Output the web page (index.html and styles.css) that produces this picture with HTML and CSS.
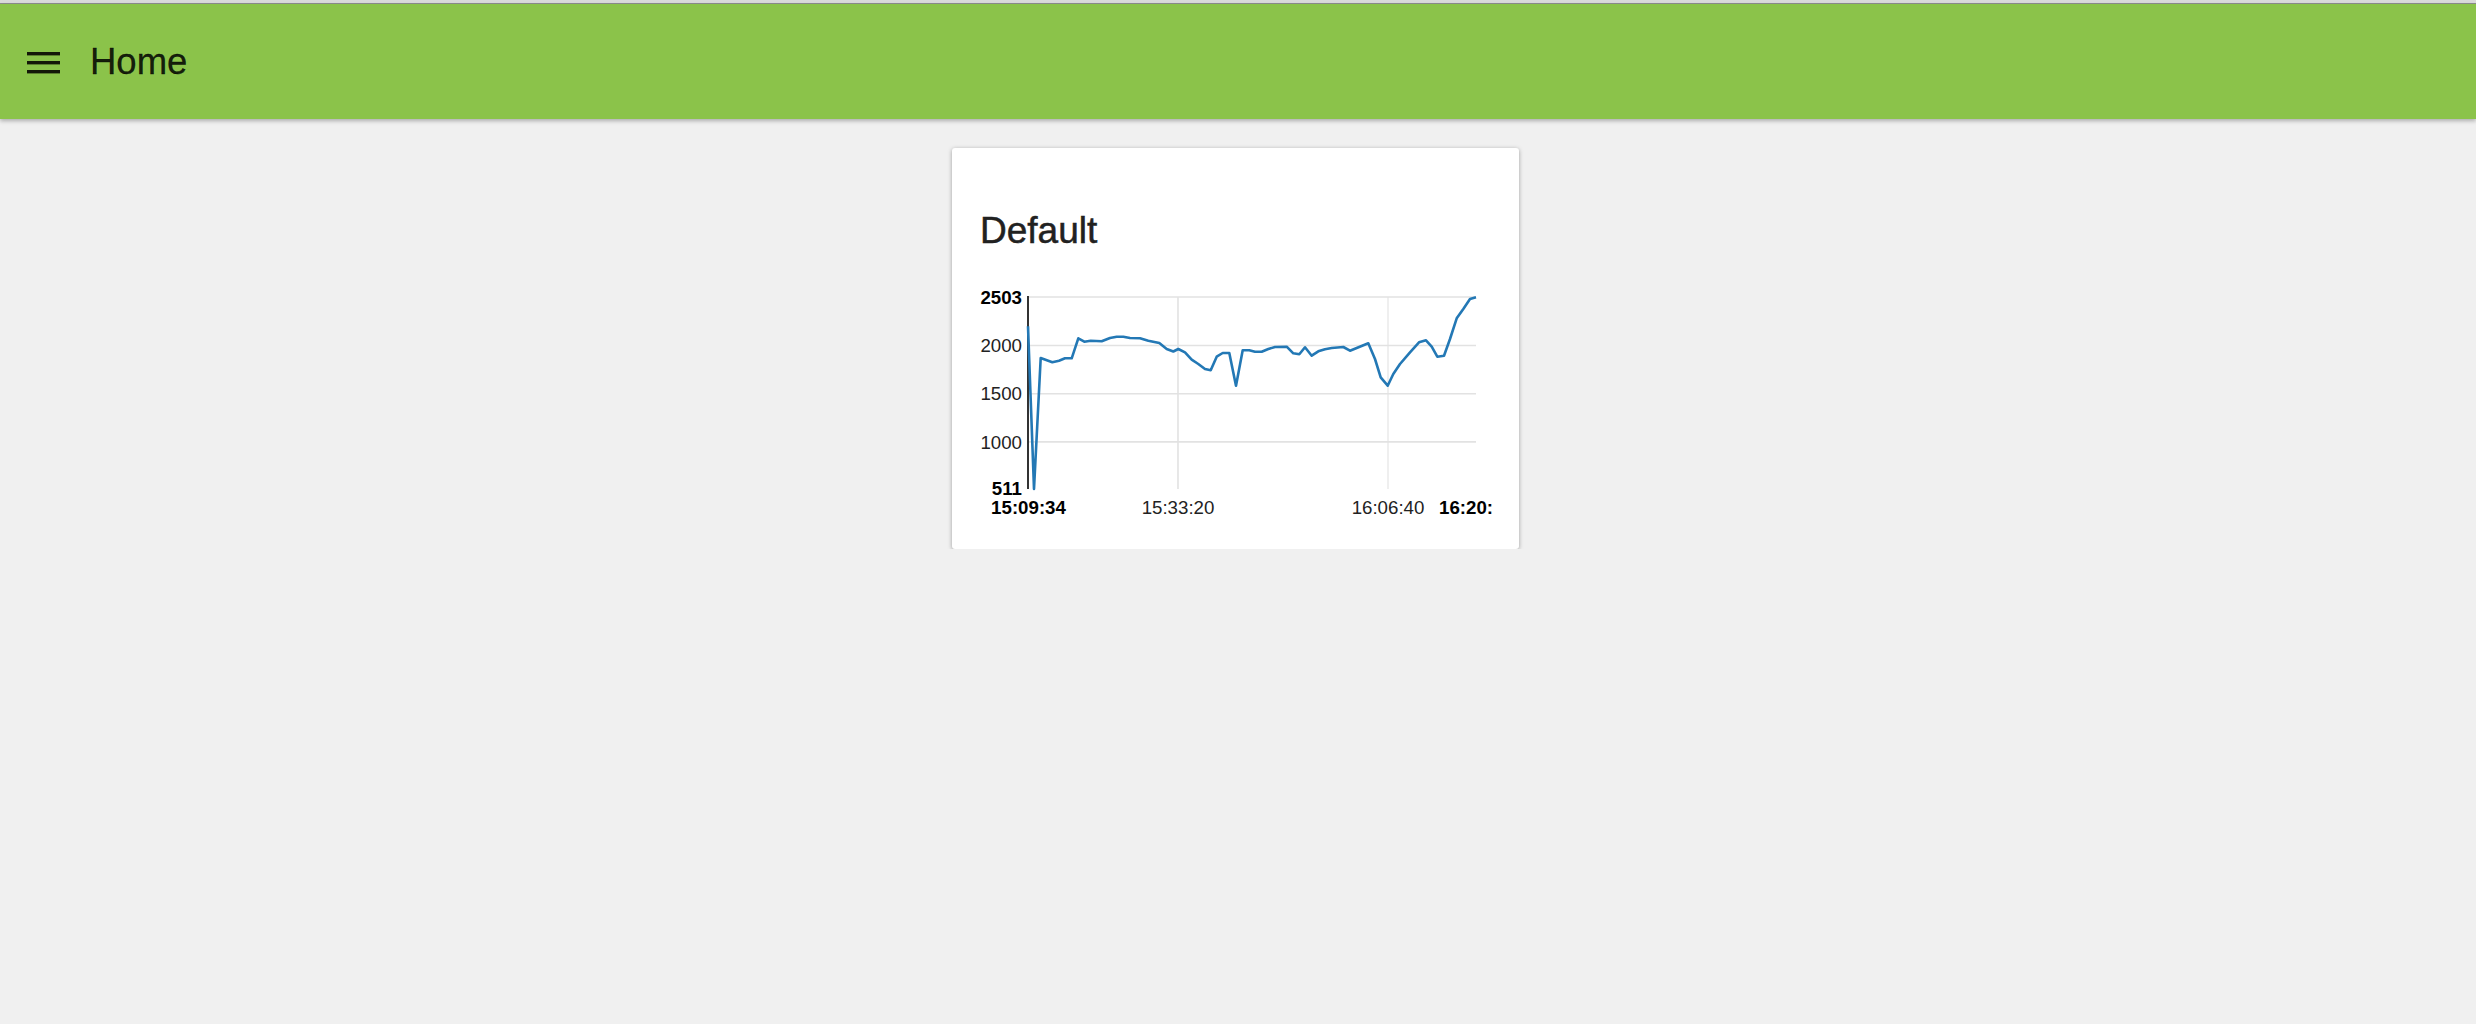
FILE: index.html
```html
<!DOCTYPE html>
<html>
<head>
<meta charset="utf-8">
<link rel="stylesheet" href="styles.css">
</head>
<body>
<div class="topstrip"></div>
<header class="appbar">
  <svg class="menu" width="33" height="22" viewBox="0 0 33 22">
    <rect x="0" y="0" width="33" height="3.4" fill="#141808"/>
    <rect x="0" y="9" width="33" height="3.4" fill="#141808"/>
    <rect x="0" y="18" width="33" height="3.4" fill="#141808"/>
  </svg>
  <h1 class="title">Home</h1>
</header>
<main class="content">
  <section class="card">
    <h2 class="card-title">Default</h2>
    <svg class="chart" width="514" height="235" viewBox="980 285 514 235">
      <g class="grid">
        <line x1="1028" y1="298" x2="1476" y2="298"/>
        <line x1="1028" y1="346.5" x2="1476" y2="346.5"/>
        <line x1="1028" y1="394.7" x2="1476" y2="394.7"/>
        <line x1="1028" y1="442.9" x2="1476" y2="442.9"/>
        <line x1="1178" y1="298" x2="1178" y2="490"/>
        <line x1="1388" y1="298" x2="1388" y2="490" class="thin"/>
      </g>
      <line class="axis" x1="1028" y1="297" x2="1028" y2="490"/>
      <g class="ylab">
        <text x="1022" y="304.5" class="b">2503</text>
        <text x="1022" y="353.2">2000</text>
        <text x="1022" y="401.4">1500</text>
        <text x="1022" y="449.6">1000</text>
        <text x="1022" y="495.7" class="b">511</text>
      </g>
      <g class="xlab">
        <text x="1028.5" y="514.5" class="b">15:09:34</text>
        <text x="1178" y="514.5">15:33:20</text>
        <text x="1388" y="514.5">16:06:40</text>
        <text x="1439" y="514.5" class="b start">16:20:</text>
      </g>
      <polyline class="series" points="1028,327.3 1034,490 1040.7,359 1052.3,363.3 1059,361.7 1065,359.3 1071.7,359.3 1078.3,339.3 1084.3,342.7 1090.7,341.7 1101.7,342.3 1110,339 1116.7,337.7 1123.3,337.7 1130,339 1140,339.3 1148.3,341.7 1159.3,344 1166.7,350 1173.3,352.5 1178.3,350 1185,353.3 1191.7,360.7 1198.3,365 1205,370 1210.7,371.3 1216.7,357.7 1222.7,354 1229.3,354 1236,386.7 1242.7,351.3 1249.3,351.3 1255,352.7 1261.7,352.7 1268.3,350 1275,348 1286.7,347.7 1293.3,354.3 1299.3,355.3 1305,348.3 1311.7,356.7 1318.3,352.3 1325,350.3 1331.7,349 1343.3,348 1350,351.7 1368.3,344.3 1375,360 1380.7,378.3 1387.7,386.7 1393.3,375 1400,365 1410,353.3 1419,343.3 1426,341.3 1431.7,347.7 1437.3,357.7 1444,356.7 1450,340 1456.7,319.3 1463.3,310 1470,300 1476,298.3"/>
    </svg>
  </section>
</main>
</body>
</html>
```
FILE: styles.css
```css
html, body {
  margin: 0;
  padding: 0;
}
body {
  background: #f0f0f0;
  font-family: "Liberation Sans", Arial, sans-serif;
}
.topstrip {
  height: 3px;
  background: #dadada;
  border-bottom: 1px solid #8e8e8e;
}
.appbar {
  height: 115px;
  background: #8bc34a;
  display: flex;
  align-items: center;
  padding-left: 27px;
  box-shadow: 0 2px 4px rgba(0, 0, 0, 0.28);
  position: relative;
}
.menu {
  display: block;
  margin-top: 3px;
  margin-right: 30px;
}
.title {
  margin: 0;
  font-size: 36.5px;
  line-height: 42px;
  font-weight: 400;
  color: rgba(0, 0, 0, 0.87);
  -webkit-text-stroke: 0.3px rgba(0, 0, 0, 0.87);
}
.content {
  display: flex;
  justify-content: center;
  padding-top: 29px;
  padding-right: 5px;
}
.card {
  width: 567px;
  box-sizing: border-box;
  background: #fff;
  border-radius: 3px;
  box-shadow: 0 1px 4px rgba(0, 0, 0, 0.35);
  padding: 62px 25px 30px 28px;
}
.card-title {
  margin: 0 0 32px 0;
  font-size: 37px;
  line-height: 42px;
  font-weight: 400;
  color: #212121;
  -webkit-text-stroke: 0.5px #212121;
}
.chart {
  display: block;
  overflow: hidden;
}
.grid line {
  stroke: #e2e2e2;
  stroke-width: 1.6;
}
.grid line.thin {
  stroke-width: 1.1;
}
.axis {
  stroke: #333;
  stroke-width: 2;
}
.ylab text, .xlab text {
  font-family: "Liberation Sans", Arial, sans-serif;
  font-size: 18.7px;
  fill: #222;
}
.ylab text {
  text-anchor: end;
}
.xlab text {
  text-anchor: middle;
}
.xlab text.start {
  text-anchor: start;
}
text.b {
  font-weight: 700;
  fill: #000;
}
.series {
  fill: none;
  stroke: #2378b5;
  stroke-width: 2.6;
  stroke-linejoin: round;
}
```
